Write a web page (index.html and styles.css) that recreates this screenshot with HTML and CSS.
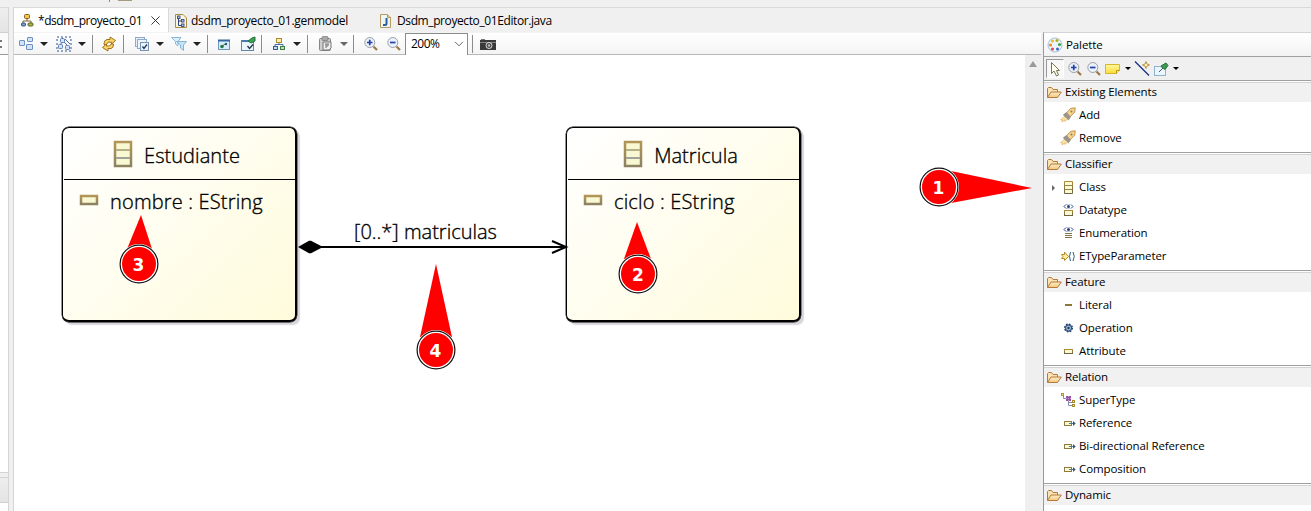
FILE: index.html
```html
<!DOCTYPE html>
<html lang="es">
<head>
<meta charset="utf-8">
<title>dsdm_proyecto_01</title>
<link rel="stylesheet" href="styles.css">
</head>
<body>
<svg class="defs" width="0" height="0">
  <defs>
    <linearGradient id="gold" x1="0" y1="0" x2="0" y2="1"><stop offset="0" stop-color="#b08a3c"/><stop offset="1" stop-color="#6e6444"/></linearGradient>
    <linearGradient id="bronze" x1="0" y1="0" x2="0" y2="1"><stop offset="0" stop-color="#b39556"/><stop offset="1" stop-color="#8b8262"/></linearGradient>
    <linearGradient id="fold" x1="0" y1="0" x2="0" y2="1"><stop offset="0" stop-color="#fdeecb"/><stop offset="1" stop-color="#f2c77c"/></linearGradient>
    <linearGradient id="note" x1="0" y1="0" x2="0" y2="1"><stop offset="0" stop-color="#fff9a0"/><stop offset="1" stop-color="#fbdc35"/></linearGradient>
    <symbol id="i-folder" viewBox="0 0 16 16"><path d="M1.500 12.500V3.500L2.500 2.500H5.500L7 4.500H11.500V7" fill="#fbe3b4" stroke="#b5793a"/><path d="M1.500 12.500L5 7H15.300L11.500 12.500Z" fill="url(#fold)" stroke="#b5793a"/></symbol>
    <symbol id="i-rocket" viewBox="0 0 16 16"><path d="M5.500 7L10.500 1.500L15.200 .8L14.800 5L9.500 10.500Z" fill="#f8d48a" stroke="#c08c3c" stroke-width=".9"/><path d="M3.500 7.500L6.500 5.500L10.500 10L8.500 13L4 9Z" fill="#9b9494" stroke="#857f7f" stroke-width=".5"/><path d="M4 9.500L.5 13L2.500 12.800L2 15L5 12.800L5 14.500L7.500 12Z" fill="#fde6ac" stroke="#d8a654" stroke-width=".6"/><circle cx="11.500" cy="4.500" r="1" fill="#6a7fa4"/></symbol>
    <symbol id="i-class" viewBox="0 0 16 16"><path d="M4.500 2.500H12.500V14.500H4.500Z" fill="#fafad2" stroke="url(#gold)"/><path d="M5 6.500H12M5 10.500H12" stroke="#8f8451"/></symbol>
    <symbol id="i-datatype" viewBox="0 0 16 16"><path d="M6 2.500L4 4.500L6 6.500M11 2.500L13 4.500L11 6.500" fill="none" stroke="#24417e"/><path d="M6.500 2.500H10.500M6.500 6.500H10.500" stroke="#8999b8" stroke-dasharray="1 1"/><circle cx="8.500" cy="4.500" r="1.500" fill="#24417e"/><rect x="4.500" y="8.500" width="8" height="5" fill="#fafad2" stroke="url(#gold)"/></symbol>
    <symbol id="i-enum" viewBox="0 0 16 16"><path d="M6 2.500L4 4.500L6 6.500M11 2.500L13 4.500L11 6.500" fill="none" stroke="#24417e"/><path d="M6.500 2.500H10.500M6.500 6.500H10.500" stroke="#8999b8" stroke-dasharray="1 1"/><circle cx="8.500" cy="4.500" r="1.500" fill="#24417e"/><path d="M5 8.500H12M5 10.500H12M5 12.500H12" stroke="#857344"/></symbol>
    <symbol id="i-etype" viewBox="0 0 16 16"><path d="M1.500 6.500H4.500V4L8.500 8.500L4.500 12.500V10.500H1.500L3 8.500Z" fill="#fff0a0" stroke="#b78920"/><path d="M10.500 4Q8.500 8.500 10.500 13M13 4Q15.500 8.500 13 13" fill="none" stroke="#2d5d81"/></symbol>
    <symbol id="i-literal" viewBox="0 0 16 16"><path d="M5 8H12" stroke="#8f7638" stroke-width="2"/></symbol>
    <symbol id="i-op" viewBox="0 0 16 16"><circle cx="8.500" cy="8" r="3.700" fill="#88a5c8" stroke="#1b3a66" stroke-width="1.600" stroke-dasharray="1.600 1.300"/><circle cx="8.500" cy="8" r="3" fill="#a9bfd8" stroke="#294a78"/><circle cx="8.500" cy="8" r="1.200" fill="#173963"/></symbol>
    <symbol id="i-attr" viewBox="0 0 16 16"><rect x="4.500" y="6.500" width="8" height="4" fill="#fafad2" stroke="url(#gold)"/></symbol>
    <symbol id="i-ref" viewBox="0 0 16 16"><rect x="4.500" y="6.500" width="7" height="4" fill="#fafad2" stroke="#91793f"/><path d="M9 8.500H14" stroke="#4a7c9a"/><path d="M13 6L15.700 8.500L13 11Z" fill="#3c5364"/></symbol>
    <symbol id="i-super" viewBox="0 0 16 16"><path d="M3.500 4V6.500H6M8.500 8V13.500H12M8.500 10.500H12" fill="none" stroke="#858bb0"/><rect x="1.500" y="1.500" width="2" height="2" fill="#ffe88b" stroke="#b59531"/><rect x="6" y="4" width="5" height="5" fill="#9553a5"/><path d="M6 6.500H11M8.500 4V9" stroke="#c79ad2" stroke-dasharray="1 1"/><rect x="12.500" y="8.500" width="2" height="2" fill="#ffe88b" stroke="#a58a2d"/><rect x="12.500" y="12.500" width="2" height="2" fill="#ffe88b" stroke="#a58a2d"/></symbol>
    <symbol id="i-zoomin" viewBox="0 0 16 16"><path d="M10.500 10.500L14 14" stroke="#9a7848" stroke-width="2.200"/><circle cx="6.800" cy="6.500" r="5" fill="#e9f1fc" stroke="#9ca0a7"/><path d="M4 6.500H9.500M6.750 3.800V9.200" stroke="#263fa5" stroke-width="1.700"/></symbol>
    <symbol id="i-zoomout" viewBox="0 0 16 16"><path d="M10.500 10.500L14 14" stroke="#9a7848" stroke-width="2.200"/><circle cx="6.800" cy="6.500" r="5" fill="#e9f1fc" stroke="#9ca0a7"/><path d="M4 6.500H9.500" stroke="#263fa5" stroke-width="1.700"/></symbol>
    <symbol id="i-tree" viewBox="0 0 16 16"><path d="M8 6V8.500M4 11V8.500H12V11" fill="none" stroke="#4a6fa8"/><rect x="5.500" y="2.500" width="5" height="4" fill="#fff0a8" stroke="#ad8a31"/><rect x="2.500" y="10.500" width="4" height="3" fill="#c4daf2" stroke="#345f96"/><rect x="9.500" y="10.500" width="4" height="3" fill="#b9dfb0" stroke="#3e7d45"/></symbol>
    <symbol id="i-ecore" viewBox="0 0 16 16"><path d="M8 5V8H4V11M8 8H12V11" fill="none" stroke="#7a6234"/><rect x="5.500" y="1.500" width="5" height="4" rx="1" fill="#f5c44e" stroke="#8a6420"/><rect x="2.500" y="10" width="4" height="3" rx="1" fill="#79a0d4" stroke="#34507e"/><rect x="9" y="10" width="5" height="3" rx="1" fill="#a6b64c" stroke="#59652a"/></symbol>
    <symbol id="i-pin" viewBox="0 0 16 16"><rect x="1.500" y="5.500" width="11" height="9" fill="#eaf5fd" stroke="#8fb3cd"/><path d="M6 11L10 7" stroke="#555"/><path d="M8 5L13 2L15 4.500L12 8.500L10.500 7.500L9 6.500Z" fill="#3f9a54" stroke="#24713a"/></symbol>
  </defs>
</svg>
<div class="ide">
  <div class="top-strip"><i class="strip-sep"></i><i class="strip-chip"></i></div>
  <div class="work">
    <aside class="left-stack">
      <div class="stack-tab"></div>
      <div class="stack-bar"><i></i><i></i></div>
      <div class="stack-body"></div>
      <div class="stack-gap"></div>
      <div class="stack-tab low"></div>
      <div class="stack-rest"></div>
    </aside>
    <main class="editor">
      <nav class="tabs">
        <div class="tab active">
          <svg class="ic"><use href="#i-ecore"/></svg><span>*dsdm_proyecto_01</span>
          <svg class="close" viewBox="0 0 10 10"><path d="M.5 .5L9.500 9.500M9.500 .5L.5 9.500" stroke="#222" fill="none"/></svg>
        </div>
        <div class="tab gen">
          <svg class="ic" viewBox="0 0 16 16"><path d="M2.500 1.500H10L13.500 5V14.500H2.500Z" fill="#fff6d8" stroke="#a98b46"/><path d="M5.500 5V12.500H8M5.500 8H8" stroke="#283e85" fill="none"/><g fill="#a9c2ea" stroke="#2f4a92" stroke-width=".9"><rect x="4.500" y="3" width="2.500" height="2.500"/><rect x="8.500" y="6.500" width="2.500" height="2.500"/><rect x="8.500" y="11" width="2.500" height="2.500"/></g></svg><span>dsdm_proyecto_01.genmodel</span>
        </div>
        <div class="tab java">
          <svg class="ic" viewBox="0 0 16 16"><path d="M2.500 1.500H9.500L12.500 4.500V14.500H2.500Z" fill="#edf5fc" stroke="#b49b5f"/><path d="M9.500 1.500V4.500H12.500" fill="#e7c77a" stroke="#b49b5f"/><path d="M8.500 5V10.500Q8.500 12 7 12H5" fill="none" stroke="#2d5e91" stroke-width="2"/></svg><span>Dsdm_proyecto_01Editor.java</span>
        </div>
      </nav>
      <div class="below">
        <section class="canvas-col">
          <div class="toolbar">
            <svg class="ic" viewBox="0 0 16 16"><g fill="#d4e4f8" stroke="#6d8fc2"><rect x="1.500" y="4.500" width="5" height="5" rx=".5"/><rect x="9.500" y="1.500" width="5" height="4" rx=".5"/><rect x="8.500" y="8.500" width="6" height="5" rx=".5"/></g></svg>
            <i class="caret"></i>
            <svg class="ic g8" viewBox="0 0 16 16"><path d="M1 1H15V15H1Z" fill="none" stroke="#31568c" stroke-dasharray="2 2"/><path d="M4 9L7 5L12 10M9 3L14 8" stroke="#4a6ea5" fill="none"/><g fill="#d4e4f8" stroke="#5b80b8"><rect x="4.500" y="2.500" width="4" height="4" rx="1"/><rect x="2.500" y="8.500" width="4" height="4" rx="1"/><rect x="9.500" y="9.500" width="4" height="4" rx="1"/></g></svg>
            <i class="caret"></i><i class="sep g6"></i>
            <svg class="ic g8" viewBox="0 0 16 16"><path d="M3 8.500L3.500 5L6 3.500H9V1L14.500 4.500L10.500 8V6.200H7L5.500 8.500Z" fill="#f9d66b" stroke="#a36f15"/><path d="M12.500 8L12 11L10 12.500H7V15L1.500 11.500L5.500 8V10H8.500L10 8Z" fill="#f9d66b" stroke="#a36f15"/></svg>
            <i class="sep g6"></i>
            <svg class="ic g10" viewBox="0 0 16 16"><rect x="1.500" y="1.500" width="9" height="9" fill="#e6f0fa" stroke="#8fabc9"/><rect x="3.500" y="3.500" width="9" height="9" fill="#eef5fc" stroke="#8fabc9"/><rect x="6.500" y="6.500" width="8" height="8" fill="#eaf3fb" stroke="#7594b5"/><path d="M8.500 10.500L10 12.500L13 8.500" fill="none" stroke="#235" stroke-width="1.300"/></svg>
            <i class="caret"></i>
            <svg class="ic g7" viewBox="0 0 16 16"><path d="M.5 1.500H10L7 5.500V10L4.500 8V5.500Z" fill="#d9effc" stroke="#8db7d8"/><path d="M5.500 5.500H15.500L12.500 9V14.500L9.500 12V9Z" fill="#c5e4f7" stroke="#86b3d5"/></svg>
            <i class="caret"></i><i class="sep g6"></i>
            <svg class="ic g8" viewBox="0 0 16 16"><rect x="2.500" y="4.500" width="11" height="9" fill="#d8edf8" stroke="#6f97b8"/><path d="M2 4.500H14" stroke="#3565a2" stroke-width="2"/><circle cx="6" cy="10.500" r="1.800" fill="#28764c"/><path d="M7 9.500L9 8" stroke="#28764c"/><circle cx="10" cy="8" r="1.200" fill="#245a80"/></svg>
            <svg class="ic g8" viewBox="0 0 16 16"><rect x="1.500" y="4.500" width="12" height="10" fill="#eaf5fd" stroke="#6088a6"/><path d="M2 5H9" stroke="#4a78ac" stroke-width="2"/><path d="M8 5L12 2L15 1V5L11 7Z" fill="#38a458" stroke="#24713a"/><path d="M7.500 10L9.500 12.500L13 8.500" fill="none" stroke="#234" stroke-width="1.300"/></svg>
            <i class="sep g5"></i>
            <svg class="ic g9"><use href="#i-tree"/></svg>
            <i class="caret"></i><i class="sep g6"></i>
            <svg class="ic g10" viewBox="0 0 16 16"><rect x="1.500" y="2.500" width="11" height="12" rx="1" fill="#ccc" stroke="#858585"/><rect x="4" y=".5" width="6" height="4" rx="1" fill="#aaa" stroke="#777" stroke-width=".7"/><path d="M5 6H13V12L11 14H5Z" fill="#eee" stroke="#777"/><path d="M7 8H11M8 8V12M10 8V10H8" stroke="#777" fill="none"/></svg>
            <i class="caret dim"></i><i class="sep g5"></i>
            <svg class="ic g9"><use href="#i-zoomin"/></svg>
            <svg class="ic g7"><use href="#i-zoomout"/></svg>
            <div class="combo"><span>200%</span><svg width="10" height="6" viewBox="0 0 10 6"><path d="M1 .8L5 4.800L9 .8" fill="none" stroke="#666"/></svg></div>
            <i class="sep g4"></i>
            <svg class="ic g7" viewBox="0 0 16 16"><path d="M0 4H16V14H0Z" fill="#393939"/><path d="M1 3.500H5" stroke="#777"/><path d="M0 6.500H16" stroke="#858585"/><circle cx="9" cy="9.500" r="3" fill="#454545" stroke="#ddd"/><circle cx="9" cy="9.500" r="1.200" fill="#bbb"/></svg>
          </div>
          <div class="canvas-row">
            <div class="canvas">
              <div class="node estudiante">
                <div class="node-head"><svg class="cls" viewBox="0 0 20 28"><rect x="2" y="2" width="16" height="24" fill="#f8f8d2" stroke="url(#bronze)" stroke-width="2.500"/><path d="M3 10H17" stroke="#b5b088" stroke-width="2"/><path d="M3 18H17" stroke="#a2a29a" stroke-width="2"/></svg><span>Estudiante</span></div>
                <div class="node-attr"><svg class="att" viewBox="0 0 20 12"><rect x="2" y="2" width="16" height="8" fill="#f8f8d2" stroke="url(#bronze)" stroke-width="2.500"/></svg><span>nombre : EString</span></div>
              </div>
              <div class="node matricula">
                <div class="node-head"><svg class="cls" viewBox="0 0 20 28"><rect x="2" y="2" width="16" height="24" fill="#f8f8d2" stroke="url(#bronze)" stroke-width="2.500"/><path d="M3 10H17" stroke="#b5b088" stroke-width="2"/><path d="M3 18H17" stroke="#a2a29a" stroke-width="2"/></svg><span>Matricula</span></div>
                <div class="node-attr"><svg class="att" viewBox="0 0 20 12"><rect x="2" y="2" width="16" height="8" fill="#f8f8d2" stroke="url(#bronze)" stroke-width="2.500"/></svg><span>ciclo : EString</span></div>
              </div>
              <svg class="edge" viewBox="0 0 272 16"><path d="M24 8H269" stroke="#000" stroke-width="2"/><path d="M1 8L12 1.700H14L26 8L14 14.300H12Z"/><path d="M255 2L269 8L255 14" fill="none" stroke="#000" stroke-width="2"/></svg>
              <span class="edge-label">[0..*] matriculas</span>
              <svg class="pins" viewBox="14 55 1029 456">
                <g fill="#f00">
                  <path d="M951 171L1032 188L951 203Z"/><path d="M637 222L624 259H651Z"/><path d="M141 215L127 249H152Z"/><path d="M436 264L420 337H452Z"/>
                </g>
                <g fill="#f00" stroke="#fff" stroke-width="3"><circle cx="939" cy="187" r="18.500"/><circle cx="638" cy="274" r="18.500"/><circle cx="139" cy="264" r="18.500"/><circle cx="436" cy="350" r="18.500"/></g>
                <g fill="none" stroke="#111" stroke-width="1.200"><circle cx="939" cy="187" r="18.900"/><circle cx="638" cy="274" r="18.900"/><circle cx="139" cy="264" r="18.900"/><circle cx="436" cy="350" r="18.900"/></g>
                <g class="pin-no"><text x="938.500" y="193.500">1</text><text x="638" y="280.500">2</text><text x="138.500" y="270.500">3</text><text x="435.500" y="356.500">4</text></g>
              </svg>
            </div>
            <div class="scroll"><i></i></div>
          </div>
        </section>
        <aside class="palette">
          <div class="pal-title"><svg class="ic" viewBox="0 0 16 16"><circle cx="8" cy="8" r="7" fill="#eef4fc" stroke="#a9bfdc"/><circle cx="5.500" cy="4" r="1.500" fill="#e3bd24"/><circle cx="10" cy="3.500" r="1.500" fill="#aab21d"/><circle cx="12.500" cy="7.500" r="1.600" fill="#39a449"/><circle cx="3.500" cy="8" r="1.600" fill="#ef8b20"/><circle cx="5.500" cy="12" r="1.500" fill="#d84848"/><circle cx="10.500" cy="12" r="1.500" fill="#3866c3"/></svg><span>Palette</span></div>
          <div class="pal-tools">
            <div class="picked"><svg class="ic" viewBox="0 0 16 16"><path d="M4.500 1.500V12.500L7 10L9.500 15L11.500 14L9.500 9.500H12.500Z" fill="#fffef0" stroke="#777353"/></svg></div>
            <svg class="ic g3"><use href="#i-zoomin"/></svg>
            <svg class="ic g3"><use href="#i-zoomout"/></svg>
            <svg class="ic g3" viewBox="0 0 16 16"><path d="M.5 3.500H14.500V9.500L11.500 12.500H.5Z" fill="url(#note)" stroke="#d8b52c"/><path d="M14.500 9.500H11.500V12.500" fill="#fff5a0" stroke="#b7941d"/></svg>
            <i class="mini g4"></i>
            <svg class="ic g3" viewBox="0 0 16 16"><path d="M1 .5L15 14.500" stroke="#12307c" stroke-width="1.300"/><path d="M12 .5L13 3L15.500 4L13 5L12 7.500L11 5L8.500 4L11 3Z" fill="#fff1b0" stroke="#a97f2b" stroke-width=".8"/></svg>
            <svg class="ic g3"><use href="#i-pin"/></svg>
            <i class="mini g4"></i>
          </div>
          <div class="group"><h3><svg class="ic"><use href="#i-folder"/></svg>Existing Elements</h3>
            <div class="row"><svg class="ic"><use href="#i-rocket"/></svg>Add</div>
            <div class="row"><svg class="ic"><use href="#i-rocket"/></svg>Remove</div></div>
          <div class="group"><h3><svg class="ic"><use href="#i-folder"/></svg>Classifier</h3>
            <div class="row opens"><svg class="ic"><use href="#i-class"/></svg>Class</div>
            <div class="row"><svg class="ic"><use href="#i-datatype"/></svg>Datatype</div>
            <div class="row"><svg class="ic"><use href="#i-enum"/></svg>Enumeration</div>
            <div class="row"><svg class="ic"><use href="#i-etype"/></svg>ETypeParameter</div></div>
          <div class="group"><h3><svg class="ic"><use href="#i-folder"/></svg>Feature</h3>
            <div class="row"><svg class="ic"><use href="#i-literal"/></svg>Literal</div>
            <div class="row"><svg class="ic"><use href="#i-op"/></svg>Operation</div>
            <div class="row"><svg class="ic"><use href="#i-attr"/></svg>Attribute</div></div>
          <div class="group"><h3><svg class="ic"><use href="#i-folder"/></svg>Relation</h3>
            <div class="row"><svg class="ic"><use href="#i-super"/></svg>SuperType</div>
            <div class="row"><svg class="ic"><use href="#i-ref"/></svg>Reference</div>
            <div class="row"><svg class="ic"><use href="#i-ref"/></svg>Bi-directional Reference</div>
            <div class="row"><svg class="ic"><use href="#i-ref"/></svg>Composition</div></div>
          <div class="group last"><h3><svg class="ic"><use href="#i-folder"/></svg>Dynamic</h3></div>
        </aside>
      </div>
    </main>
  </div>
</div>
</body>
</html>
```
FILE: styles.css
```css
* { box-sizing: border-box; }
body { margin: 0; overflow: hidden; background: #f0f0f0; color: #000; font: 11.5px/16px "Open Sans", "Noto Sans", sans-serif; }
.defs { position: absolute; }
svg { display: block; flex: none; }
.ic { width: 16px; height: 16px; }
.ide { display: flex; flex-direction: column; width: 1311px; height: 511px; }
.top-strip { display: flex; height: 7px; flex: none; background: #f0f0f0; }
.strip-sep { width: 1px; height: 2px; margin-left: 109px; background: #888; }
.strip-chip { width: 14px; height: 1px; margin-left: 8px; background: #a49a80; }
.work { display: flex; flex: 1; min-height: 0; }

.left-stack { display: flex; flex-direction: column; width: 9px; margin-right: 4px; border-right: 1px solid #d4d4d4; border-top: 1px solid #d9d9d9; flex: none; }
.stack-tab { height: 25px; background: linear-gradient(#eee, #e4e4e4); border-bottom: 1px solid #d0d0d0; flex: none; }
.stack-bar { display: flex; flex-direction: column; gap: 4px; height: 22px; padding-top: 7px; background: #fafafa; border-bottom: 1px solid #999; flex: none; }
.stack-bar i { width: 2px; height: 2px; background: #777; }
.stack-body { flex: 1; background: #fff; border-bottom: 1px solid #d4d4d4; }
.stack-gap { height: 4px; flex: none; background: #f0f0f0; }
.stack-tab.low { height: 26px; border-top: 1px solid #d4d4d4; }
.stack-rest { height: 8px; background: #fff; flex: none; }

.editor { display: flex; flex-direction: column; flex: 1; min-width: 0; border-left: 1px solid #d4d4d4; border-top: 1px solid #d9d9d9; }
.tabs { display: flex; height: 24px; flex: none; }
.tab { display: flex; align-items: center; padding-top: 1px; font-size: 12px; }
.tab.active { width: 155px; background: #fff; border-right: 1px solid #d9d9d9; padding-left: 5px; }
.tab.active span { margin-left: 3px; width: 106px; letter-spacing: -.45px; }
.tab.gen { width: 204px; padding-left: 4px; }
.tab span { white-space: nowrap; }
.tab.gen span { margin-left: 2px; letter-spacing: -.3px; }
.tab.java { padding-left: 5px; }
.tab.java span { margin-left: 3px; letter-spacing: -.4px; }
.close { width: 9px; height: 9px; margin-left: 7px; }
.below { display: flex; flex: 1; min-height: 0; }

.canvas-col { display: flex; flex-direction: column; width: 1029px; flex: none; }
.toolbar { display: flex; align-items: center; width: 1027px; height: 23px; padding-left: 4px; background: linear-gradient(#fff, #f4f4f4); border-bottom: 1px solid #b8b8b8; border-top: 1px solid #f3f3f3; flex: none; }
.g3 { margin-left: 3px; } .g4 { margin-left: 4px; } .g5 { margin-left: 5px; } .g6 { margin-left: 6px; }
.g7 { margin-left: 7px; } .g8 { margin-left: 8px; } .g9 { margin-left: 9px; } .g10 { margin-left: 10px; }
.caret { margin-left: 6px; border: 4px solid transparent; border-top-color: #222; border-bottom: 0; }
.caret.dim { border-top-color: #666; }
.sep { width: 1px; height: 18px; background: #8c8c8c; flex: none; }
.combo { display: flex; align-items: center; justify-content: space-between; width: 63px; height: 22px; margin-left: 3px; padding: 0 3px 0 5px; border: 1px solid #8c8c8c; border-bottom: 0; background: #fff; font-size: 12px; }
.combo span { letter-spacing: -.5px; }

.canvas-row { display: flex; flex: 1; min-height: 0; }
.canvas { position: relative; width: 1011px; background: #fff; }
.scroll { width: 16px; background: #efefef; padding: 6px 0 0 4px; }
.scroll i { display: block; width: 0; border: 4px solid transparent; border-bottom: 6px solid #999; border-top: 0; }

/* Diagram nodes sit freely on the canvas */
.node { position: absolute; top: 72px; width: 235px; height: 195px; border: solid #000; border-width: 1px 2px 2px 1px; border-radius: 7px; background: linear-gradient(135deg, #fff, #fffbdc); box-shadow: 0 0 0 .4px #000, 3px 3px 1px #d9d5dd; font-size: 20px; font-weight: 300; }
.node span { -webkit-text-stroke: .35px #000; }
.estudiante { left: 48px; }
.matricula { left: 552px; }
.node-head { display: flex; align-items: center; justify-content: center; height: 52px; margin: 0 0 0 1px; border-bottom: 1px solid #000; gap: 11px; padding: 4px 6px 0 0; }
.node-head span { letter-spacing: .05px; }
.cls { width: 20px; height: 28px; margin-top: -4px; }
.att { width: 20px; height: 12px; }
.node-attr { display: flex; align-items: center; height: 44px; padding-left: 16px; gap: 11px; line-height: 28px; letter-spacing: .17px; }
.node-attr .att { margin-top: -5px; }
.edge { position: absolute; left: 283px; top: 184px; width: 272px; height: 16px; }
.edge-label { position: absolute; left: 340px; top: 163px; font-size: 20px; font-weight: 300; line-height: 28px; white-space: nowrap; -webkit-text-stroke: .35px #000; }
.pins { position: absolute; left: 0; top: 0; width: 1029px; height: 456px; z-index: 2; }
.pin-no { font: bold 17px "DejaVu Sans", sans-serif; fill: #fff; text-anchor: middle; }

.palette { flex: 1; min-width: 0; border-left: 1px solid #999; border-top: 1px solid #d4d4d4; background: #fff; letter-spacing: -.1px; }
.pal-title { display: flex; align-items: center; height: 24px; padding-left: 3px; gap: 3px; background: linear-gradient(#fff, #f3f3f3); border-bottom: 1px solid #a0a0a0; }
.pal-tools { display: flex; align-items: center; height: 23px; padding-left: 2px; background: #f0f0f0; }
.picked { width: 18px; height: 19px; padding-top: 1px; border: 1px solid #fff; border-top-color: #999; border-left-color: #999; background: #f7f7f7; }
.mini { border: 3px solid transparent; border-top-color: #000; border-bottom: 0; }
.group { border-top: 1px solid #a0a0a0; padding-bottom: 2px; }
.group h3 { display: flex; align-items: center; height: 20px; margin: 1px 0 2px; padding: 0 0 2px 2px; gap: 3px; font: inherit; background: #f1f1f1; border-top: 1px solid #d4d4d4; }
.group h3 .ic { margin-top: 3px; }
.row { display: flex; align-items: center; height: 23px; padding: 0 0 2px 16px; gap: 3px; }
.row .ic { margin-top: 1px; }
.opens { padding-left: 8px; }
.opens::before { content: ""; border: 3px solid transparent; border-left: 3px solid #666; border-right: 0; margin: 3px 2px 0 0; }
```
